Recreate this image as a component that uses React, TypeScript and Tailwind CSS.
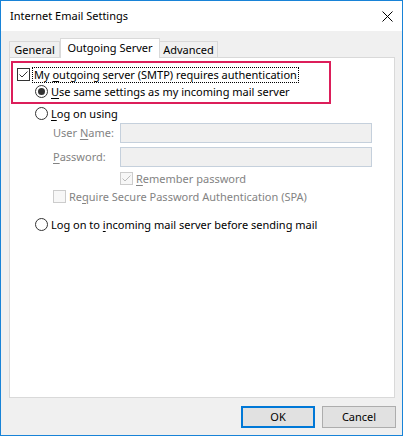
import React from "react";

const font = { fontFamily: '"Noto Sans", "Segoe UI", sans-serif' };

function Check({ checked, disabled }: { checked?: boolean; disabled?: boolean }) {
  return (
    <span
      className={
        "flex h-[13px] w-[13px] shrink-0 items-center justify-center border " +
        (disabled ? "border-[#cccccc] bg-[#f7f7f7]" : "border-[#333333] bg-white")
      }
    >
      {checked && (
        <svg width="11" height="11" viewBox="0 0 11 11">
          <path
            d="M1.5 5.5 L4 8 L9.5 2.5"
            fill="none"
            stroke={disabled ? "#bcbcbc" : "#333333"}
            strokeWidth="1"
          />
        </svg>
      )}
    </span>
  );
}

function Radio({ checked }: { checked?: boolean }) {
  return (
    <span className="flex h-[13px] w-[13px] shrink-0 items-center justify-center rounded-full border border-[#333333] bg-white">
      {checked && <span className="h-[7px] w-[7px] rounded-full bg-[#333333]" />}
    </span>
  );
}

export default function App() {
  return (
    <div
      className="flex h-[436px] w-[403px] flex-col border border-[#1883d7] bg-[#f0f0f0] text-[11px] leading-[16px] text-black"
      style={font}
    >
      {/* title bar */}
      <div className="flex h-[30px] shrink-0 items-center justify-between bg-white pl-[9px] pr-[9px]">
        <span className="text-[11px]">Internet Email Settings</span>
        <svg width="11" height="11" viewBox="0 0 11 11">
          <path d="M0.5 0.5 L10.5 10.5 M10.5 0.5 L0.5 10.5" stroke="#000" strokeWidth="1" />
        </svg>
      </div>

      {/* body */}
      <div className="flex flex-1 flex-col px-[8px]">
        {/* tabs */}
        <div className="mt-[7px] flex h-[19px] items-end">
          <div className="flex h-[16px] w-[51px] items-center justify-center border border-b-0 border-[#d9d9d9] bg-[#f0f0f0] pt-[1px]">
            General
          </div>
          <div className="relative z-10 -mb-[1px] flex h-[20px] w-[100px] items-start justify-center border border-b-0 border-[#d9d9d9] bg-white pt-[1px]">
            Outgoing Server
          </div>
          <div className="flex h-[16px] w-[58px] items-center justify-center border border-b-0 border-l-0 border-[#d9d9d9] bg-[#f0f0f0] pt-[1px]">
            Advanced
          </div>
        </div>

        {/* panel */}
        <div className="flex h-[341px] w-[386px] flex-col border border-[#d9d9d9] bg-white">
          <div className="ml-[1px] mt-[3px] w-[320px] border-2 border-[#dc1e5a] pb-[2px] pl-[4px] pt-[3px]">
            <div className="flex h-[17px] items-center">
              <Check checked />
              <span className="ml-[2px] border border-dotted border-black px-[1px] leading-[14px]">
                My <u className="underline-offset-2">o</u>utgoing server (SMTP) requires authentication
              </span>
            </div>
            <div className="ml-[18px] flex h-[17px] items-center">
              <Radio checked />
              <span className="ml-[3px]">
                <u className="underline-offset-2">U</u>se same settings as my incoming mail server
              </span>
            </div>
          </div>

          <div className="ml-[25px] mt-[1px] flex h-[17px] items-center">
            <Radio />
            <span className="ml-[3px]">
              <u className="underline-offset-2">L</u>og on using
            </span>
          </div>

          <div className="ml-[43px] mt-[1px] flex h-[20px] items-center text-[#838383]">
            <span className="w-[67px]">
              User <u className="underline-offset-2">N</u>ame:
            </span>
            <div className="h-[20px] w-[252px] border border-[#c5d0dc] bg-[#f0f0f0]" />
          </div>
          <div className="ml-[43px] mt-[4px] flex h-[20px] items-center text-[#838383]">
            <span className="w-[67px]">
              <u className="underline-offset-2">P</u>assword:
            </span>
            <div className="h-[20px] w-[252px] border border-[#c5d0dc] bg-[#f0f0f0]" />
          </div>

          <div className="ml-[110px] mt-[3px] flex h-[17px] items-center text-[#838383]">
            <Check checked disabled />
            <span className="ml-[3px]">
              <u className="underline-offset-2">R</u>emember password
            </span>
          </div>

          <div className="ml-[43px] mt-[1px] flex h-[17px] items-center text-[#838383]">
            <Check disabled />
            <span className="ml-[3px]">
              Re<u className="underline-offset-2">q</u>uire Secure Password Authentication (SPA)
            </span>
          </div>

          <div className="ml-[25px] mt-[11px] flex h-[17px] items-center">
            <Radio />
            <span className="ml-[3px]">
              Log on to <u className="underline-offset-2">i</u>ncoming mail server before sending mail
            </span>
          </div>
        </div>

        {/* buttons */}
        <div className="mt-[8px] flex justify-end gap-[7px]">
          <button className="flex h-[22px] w-[74px] items-center justify-center border-2 border-[#0078d7] bg-[#e1e1e1]">
            OK
          </button>
          <button className="mr-[-2px] flex h-[22px] w-[74px] items-center justify-center border border-[#adadad] bg-[#e1e1e1]">
            Cancel
          </button>
        </div>
      </div>
    </div>
  );
}
